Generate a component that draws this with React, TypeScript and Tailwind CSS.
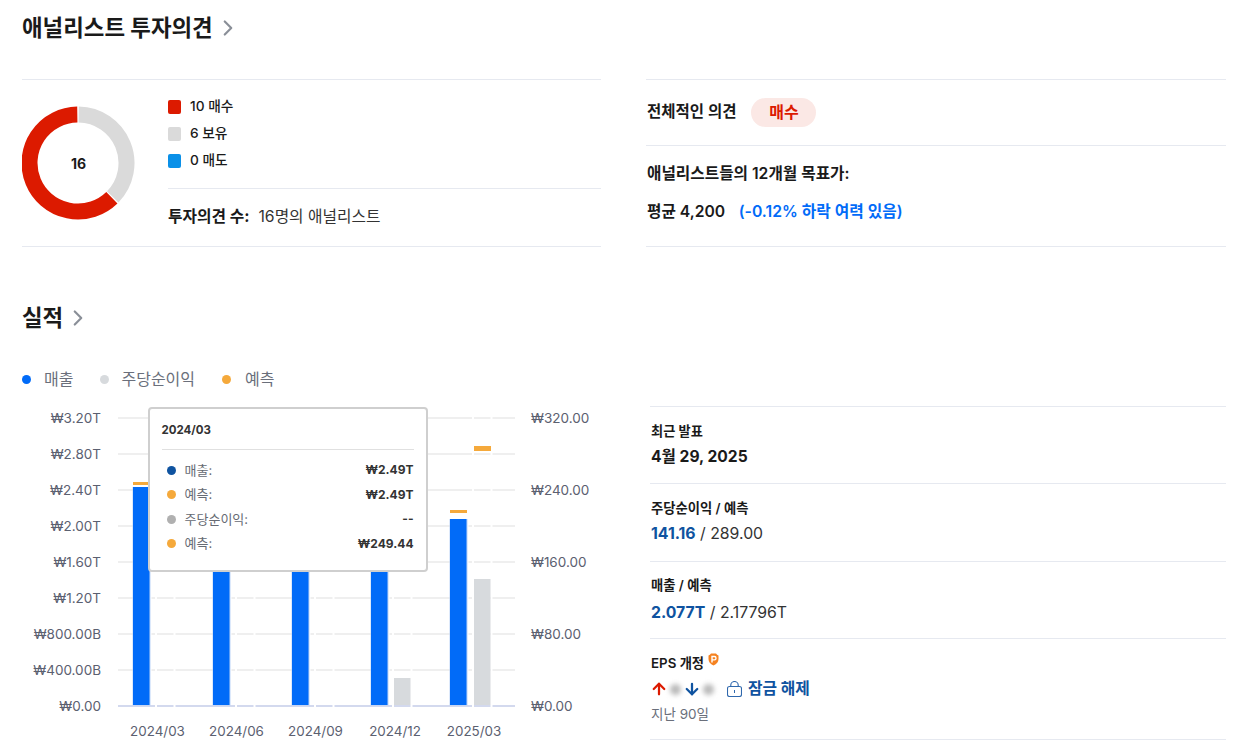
import { ArrowDown, ArrowUp, ChevronRight } from "lucide-react";

const leftTicks = ["₩3.20T", "₩2.80T", "₩2.40T", "₩2.00T", "₩1.60T", "₩1.20T", "₩800.00B", "₩400.00B", "₩0.00"];
const rightTicks = ["₩320.00", "₩240.00", "₩160.00", "₩80.00", "₩0.00"];
const quarters: [string, number][] = [["2024/03", 157.5], ["2024/06", 236.5], ["2024/09", 315.5], ["2024/12", 395], ["2025/03", 474]];
const FONT = "font-['Inter','Noto_Sans_CJK_KR',sans-serif]";

function Donut() {
  const c = 78 - 22;
  const r = 48.5;
  const pt = (deg: number) => {
    const a = ((deg - 90) * Math.PI) / 180;
    return `${c + r * Math.cos(a)} ${57 + r * Math.sin(a)}`;
  };
  return (
    <div className="relative w-[113px] h-[114px] shrink-0">
      <svg width="113" height="114" viewBox="0 0 113 114">
        <path d={`M ${pt(0.8)} A ${r} ${r} 0 0 1 ${pt(134.3)}`} fill="none" stroke="#dadada" strokeWidth="16" />
        <path d={`M ${pt(135.7)} A ${r} ${r} 0 1 1 ${pt(359.2)}`} fill="none" stroke="#dc1a00" strokeWidth="16" />
      </svg>
      <div className="absolute inset-0 flex items-center justify-center text-[14px] font-bold text-[#1a1a1a]">16</div>
    </div>
  );
}

function Legend({ color, label }: { color: string; label: string }) {
  return (
    <div className="flex items-center h-[14px] gap-[9px]">
      <span className={`w-[13px] h-[14px] rounded-[2px] ${color}`} />
      <span className="text-[13.7px] font-medium text-[#1a1a1a] -mt-[2px]">{label}</span>
    </div>
  );
}

function Chart() {
  const ys = [418, 454, 490, 526, 562, 598, 634, 670, 706];
  const blues = [133, 213, 292, 371, 450];
  const greys = [157, 237, 316, 394, 474];
  return (
    <svg width="628" height="349" viewBox="0 406 628 349" className="block">
      {ys.map((y) => (
        <line key={y} x1="118" x2="515" y1={y} y2={y} stroke={y === 706 ? "#d3d9ee" : "#efefef"} strokeWidth="2" />
      ))}
      {greys.map((x) => (
        <g key={x} fill="#ffffff">
          <rect x={x - 2} y="416" width="2" height="291" />
          <rect x={x + 16.5} y="416" width="2" height="291" />
        </g>
      ))}
      {blues.map((x, i) => (
        <g key={x}>
          <rect x={x + 16} y={i === 4 ? 519 : 487} width="2.5" height={i === 4 ? 186 : 218} fill="#ffffff" />
          <rect x={x - 0.5} y={i === 4 ? 519 : 487} width="18" height={i === 4 ? 186.5 : 218.5} fill="#bcd4f8" />
          <rect x={x} y={i === 4 ? 519 : 487} width="16.5" height={i === 4 ? 186 : 218} fill="#016bf8" />
        </g>
      ))}
      <rect x="394" y="678" width="16.5" height="27" fill="#d7dadd" />
      <rect x="474" y="579" width="16.5" height="126" fill="#d7dadd" />
      <rect x="133" y="482" width="16.5" height="3" fill="#f5a93b" />
      <rect x="450" y="510" width="17" height="3" fill="#f5a93b" />
      <rect x="474" y="446" width="17" height="5" fill="#f5a93b" />
      {leftTicks.map((t, i) => (
        <text key={t} x="101" y={ys[i] + 5} textAnchor="end" fontSize="13.5" fill="#5b6070">{t}</text>
      ))}
      {rightTicks.map((t, i) => (
        <text key={t} x="531" y={ys[i * 2] + 5} fontSize="13.5" fill="#5b6070">{t}</text>
      ))}
      {quarters.map(([t, x]) => (
        <text key={t} x={x} y="736" textAnchor="middle" fontSize="13.4" fill="#5b6070">{t}</text>
      ))}
    </svg>
  );
}

function TipRow({ color, label, value }: { color: string; label: string; value: string }) {
  return (
    <div className="flex items-center justify-between h-[24.5px] pl-[5px]">
      <span className="flex items-center gap-[9px] text-[13px] text-[#666a73]">
        <span className={`w-[9px] h-[9px] rounded-full ${color}`} />
        {label}
      </span>
      <span className="text-[12px] font-bold text-[#333333]">{value}</span>
    </div>
  );
}

function Tooltip() {
  return (
    <div className="absolute left-[148px] top-[1px] w-[280px] h-[165px] bg-white border-2 border-[#cfcfcf] rounded-[4px] pl-[11.5px] pr-[12.5px] pt-[12.5px]">
      <div className="text-[11.5px] font-bold text-[#333333] h-[17px] leading-[17px]">2024/03</div>
      <div className="border-t border-[#e0e0e0] mt-[10.5px] mb-[8px]" />
      <TipRow color="bg-[#0f53a0]" label="매출:" value="₩2.49T" />
      <TipRow color="bg-[#f5a93b]" label="예측:" value="₩2.49T" />
      <TipRow color="bg-[#b0b0b0]" label="주당순이익:" value="--" />
      <TipRow color="bg-[#f5a93b]" label="예측:" value="₩249.44" />
    </div>
  );
}

function Blur() {
  return <span className="w-[11px] h-[11px] rounded-full bg-[#b9b9b9] blur-[2.5px]" />;
}

export default function App() {
  return (
    <div className={`w-[1250px] h-[755px] overflow-hidden bg-white ${FONT} text-[#1a1a1a]`}>
      <div className="px-[22px]">
        <div className="flex items-center h-[55px] gap-[2px]">
          <h2 className="text-[22.4px] font-bold text-[#1a1a1a]">애널리스트 투자의견</h2>
          <ChevronRight size={26} strokeWidth={2} className="text-[#8a8f98] mt-[1px]" />
        </div>
        <div className="grid grid-cols-[579px_580px] gap-[45px] mt-[24px] h-[168px]">
          <div className="flex items-stretch border-y border-[#e6e9f0]">
            <div className="pt-[26px]"><Donut /></div>
            <div className="flex-1 ml-[33px] flex flex-col">
              <div className="flex flex-col gap-[13px] pt-[20px] h-[109px] border-b border-[#e6e9f0]">
                <Legend color="bg-[#dc1a00]" label="10 매수" />
                <Legend color="bg-[#dadada]" label="6 보유" />
                <Legend color="bg-[#0a90e8]" label="0 매도" />
              </div>
              <div className="flex items-center flex-1 text-[15.75px] gap-[9px] pb-[1px]">
                <span className="font-bold">투자의견 수:</span>
                <span className="text-[#333333] font-normal">16명의 애널리스트</span>
              </div>
            </div>
          </div>
          <div className="flex flex-col border-y border-[#e6e9f0]">
            <div className="flex items-center h-[66px] border-b border-[#e6e9f0] gap-[15px] pl-[1px] pb-[1px]">
              <span className="text-[15.5px] font-semibold">전체적인 의견</span>
              <span className="flex items-center justify-center w-[65px] h-[29px] rounded-full bg-[#fbe8e5] text-[16px] font-bold text-[#dc1a00]">매수</span>
            </div>
            <div className="pl-[1px] pt-[18px]">
              <div className="text-[15.7px] font-semibold h-[20px] leading-[20px]">애널리스트들의 12개월 목표가:</div>
              <div className="flex gap-[13.5px] mt-[18px] text-[15.7px] font-semibold h-[20px] leading-[20px]">
                <span>평균 4,200</span>
                <span className="text-[#016bf8] text-[15.75px]">(-0.12% 하락 여력 있음)</span>
              </div>
            </div>
          </div>
        </div>
        <div className="flex items-center h-[40px] mt-[51px] gap-[2px]">
          <h2 className="text-[22.4px] font-bold text-[#1a1a1a]">실적</h2>
          <ChevronRight size={26} strokeWidth={2} className="text-[#8a8f98]" />
        </div>
        <div className="flex items-center h-[20px] mt-[31px] text-[16px] text-[#6a6f7b]">
          <span className="w-[9px] h-[9px] rounded-full bg-[#016bf8] mr-[13px]" />매출
          <span className="w-[9px] h-[9px] rounded-full bg-[#d7dadd] ml-[27px] mr-[12px]" />주당순이익
          <span className="w-[9px] h-[9px] rounded-full bg-[#f5a93b] ml-[27px] mr-[14px]" />예측
        </div>
      </div>
      <div className="flex mt-[17px]">
        <div className="relative w-[628px] shrink-0">
          <Chart />
          <Tooltip />
        </div>
        <div className="ml-[22px] w-[576px] flex flex-col border-t border-[#e6e9f0] h-[334px]">
          <div className="h-[77px] border-b border-[#e6e9f0] pt-[14px] pl-[1px]">
            <div className="text-[13.2px] font-semibold h-[20px] leading-[20px]">최근 발표</div>
            <div className="text-[15.6px] font-bold mt-[4px]">4월 29, 2025</div>
          </div>
          <div className="h-[78px] border-b border-[#e6e9f0] pt-[14px] pl-[1px]">
            <div className="text-[13.3px] font-semibold h-[20px] leading-[20px]">주당순이익 / 예측</div>
            <div className="text-[15.8px] mt-[4px] text-[#333333]"><span className="font-bold text-[#0f53a0]">141.16</span> / 289.00</div>
          </div>
          <div className="h-[77px] border-b border-[#e6e9f0] pt-[13px] pl-[1px]">
            <div className="text-[13.3px] font-semibold h-[20px] leading-[20px]">매출 / 예측</div>
            <div className="text-[15.8px] mt-[6px] text-[#333333]"><span className="font-bold text-[#0f53a0]">2.077T</span> / 2.17796T</div>
          </div>
          <div className="h-[101px] border-b border-[#e6e9f0] pt-[15px] pl-[1px]">
            <div className="flex h-[20px] items-center text-[13.3px] font-semibold gap-[4px]">
              EPS 개정
              <svg width="11" height="13" viewBox="0 0 11 13" className="-mt-[9px]">
                <path d="M0.5 2.5 Q2 2 3 0.5 H8 Q9 2 10.5 2.5 V6 Q10.5 10 5.5 12.5 Q0.5 10 0.5 6 Z" fill="#f58220" />
                <path d="M4 9.5 V3.5 H6.5 Q8 3.5 8 5.2 Q8 6.9 6.5 6.9 H4" fill="none" stroke="#fff" strokeWidth="1.4" />
              </svg>
            </div>
            <div className="flex items-center h-[20px] mt-[5px] text-[15.8px] font-bold text-[#0f53a0] -ml-[1px]">
              <ArrowUp size={18} strokeWidth={3} className="text-[#dc1a00]" />
              <span className="flex w-[15px] pl-[2px]"><Blur /></span>
              <ArrowDown size={18} strokeWidth={3} className="text-[#0f53a0]" />
              <span className="flex w-[26px] pl-[2px]"><Blur /></span>
              <svg width="15" height="16" viewBox="0 0 15 16" fill="none" stroke="#2f68ad" strokeWidth="1.1" className="mr-[6px]">
                <rect x="0.5" y="5.5" width="14" height="10" rx="2" />
                <path d="M3.8 5.5 V4 A3.7 3.5 0 0 1 11.2 4 V5.5" />
                <rect x="7" y="9" width="1" height="3" fill="#2f68ad" stroke="none" />
              </svg>
              잠금 해제
            </div>
            <div className="text-[13.5px] text-[#6a6f7b] mt-[5px]">지난 90일</div>
          </div>
        </div>
      </div>
    </div>
  );
}
